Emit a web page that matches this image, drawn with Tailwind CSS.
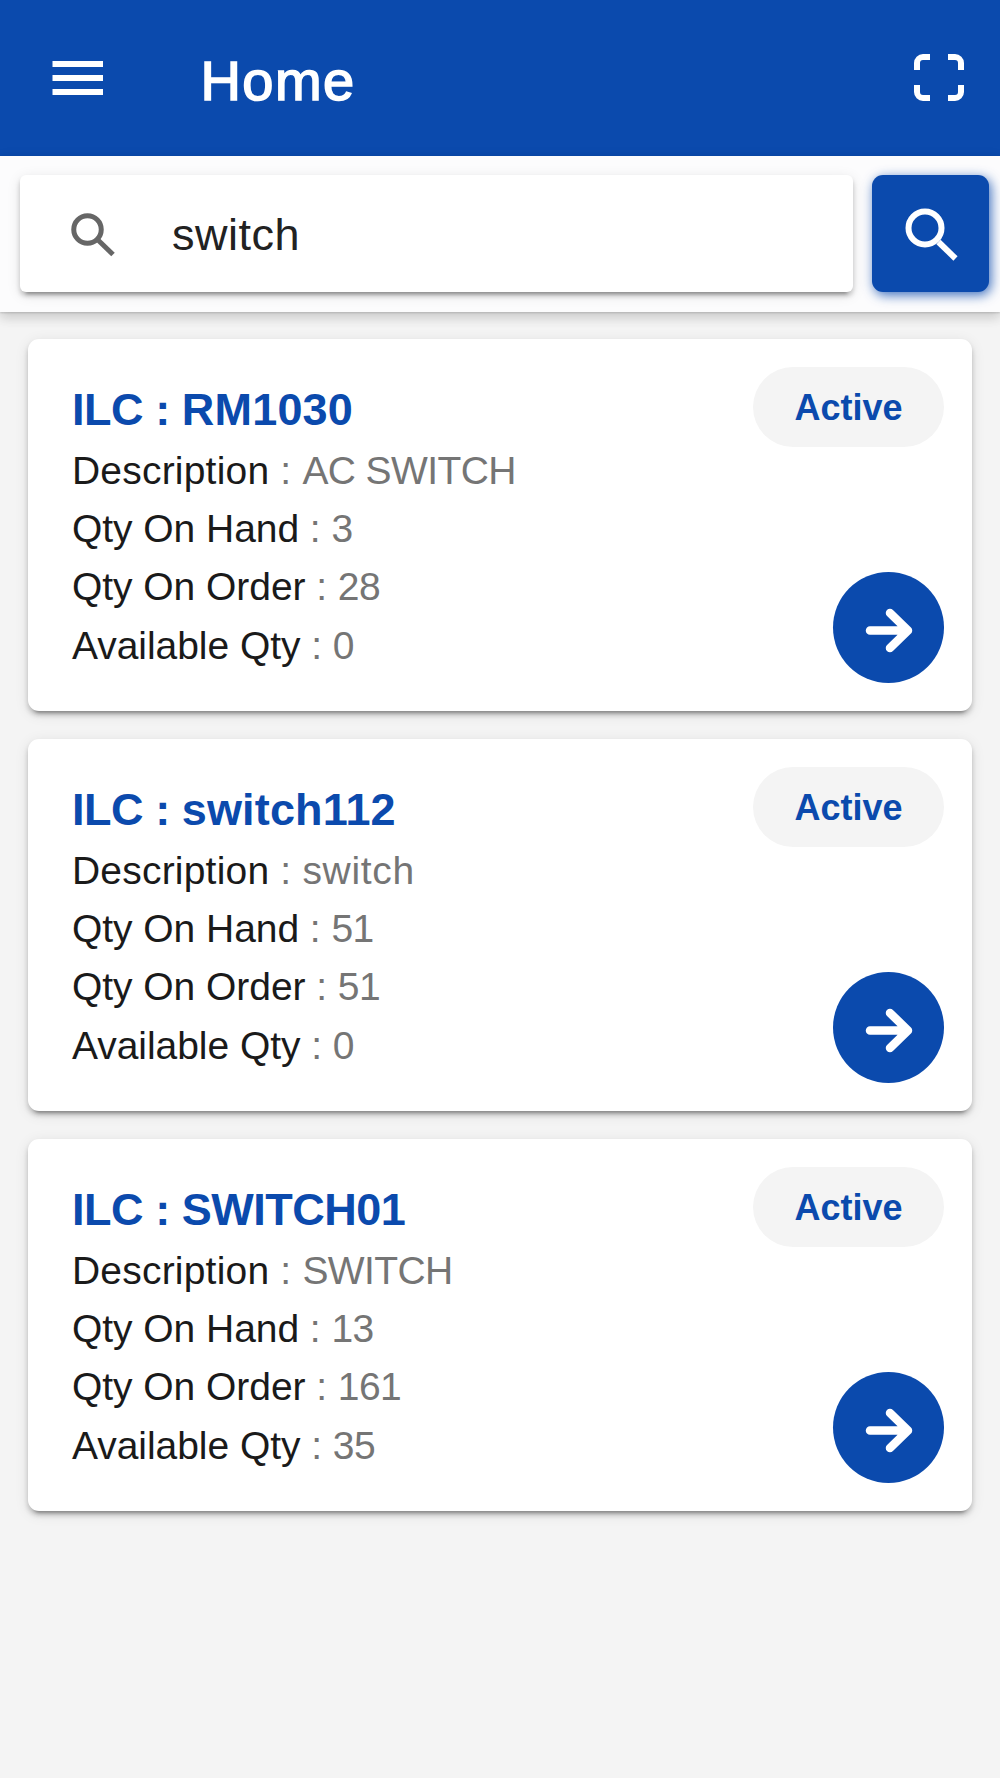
<!DOCTYPE html>
<html lang="en">
<head>
  <meta charset="UTF-8" />
  <meta name="viewport" content="width=device-width, initial-scale=1.0"/>
  <title>Home</title>
  <script src="https://cdn.jsdelivr.net/npm/@tailwindcss/browser@4"></script>
</head>
<body class="min-h-screen bg-[#f4f4f4] text-[#1a1a1a] font-['Liberation_Sans',Arial,sans-serif]">

  <header class="flex h-[155.5px] items-center bg-[#0b4aad] pl-[52px] pr-9 text-white">
    <button aria-label="Menu">
      <svg class="mt-px block h-[34px] w-[51px]" viewBox="0 0 51 34" fill="currentColor">
        <path d="M.5 0h50.5v6H.5zM.5 14h50.5v6H.5zM.5 28h50.5v6H.5z"/>
      </svg>
    </button>
    <h1 class="ml-[97.5px] mt-1.5 flex-1 text-[56px] leading-none tracking-[1.4px] [-webkit-text-stroke:1.6px_white]">Home</h1>
    <button aria-label="Scan">
      <svg class="block h-[47px] w-[50px]" viewBox="0 0 50 47" fill="none" stroke="currentColor" stroke-width="6">
        <path d="M3 16V9a6 6 0 0 1 6-6h7M34 3h7a6 6 0 0 1 6 6v7M47 31v7a6 6 0 0 1-6 6h-7M16 44H9a6 6 0 0 1-6-6v-7"/>
      </svg>
    </button>
  </header>

  <!-- Search bar -->
  <div class="flex h-[156px] gap-[19px] bg-[#fcfcfd] pl-5 pr-[11px] pt-[19.5px] shadow-[0_6px_11px_rgba(0,0,0,0.12),0_3px_14px_rgba(0,0,0,0.08),0_1px_2px_rgba(0,0,0,0.15)]">
    <div class="flex h-[117px] flex-1 items-center rounded-[6px] bg-white pl-[51px] shadow-[0_8px_3px_-6px_rgba(0,0,0,0.25),0_4px_5px_rgba(0,0,0,0.2),0_3px_14px_rgba(0,0,0,0.1)]">
      <svg class="mt-[3px] block size-[44px] text-[#666666]" viewBox="0 0 44 44" fill="none" stroke="currentColor" stroke-width="5">
        <circle cx="16.5" cy="16.5" r="13.75"/>
        <path d="M27.5 27.5L42 41.5"/>
      </svg>
      <span class="ml-[57px] mt-0.5 text-[45px] leading-none tracking-[0.5px] text-[#222222]">switch</span>
    </div>
    <button aria-label="Search" class="flex size-[117px] items-center justify-center rounded-[11px] bg-[#0b4aad] text-white shadow-[2px_3px_12px_rgba(11,74,173,0.8)]">
      <svg class="ml-[1.5px] mt-0.5 block size-[53px]" viewBox="0 0 53 53" fill="none" stroke="currentColor" stroke-width="6">
        <circle cx="20" cy="20" r="16.5"/>
        <path d="M33.5 34L50.5 50.5"/>
      </svg>
    </button>
  </div>

  <main id="itemList" class="flex flex-col gap-7 px-7 pt-[27.5px]"></main>

  <script>
    const items = [
      { ilc: "RM1030", description: "AC SWITCH", onHand: 3, onOrder: 28, available: 0 },
      { ilc: "switch112", description: "switch", onHand: 51, onOrder: 51, available: 0 },
      { ilc: "SWITCH01", description: "SWITCH", onHand: 13, onOrder: 161, available: 35 }
    ];

    const tracking = {
      "AC SWITCH": "tracking-[-0.6px]",
      "SWITCH": "tracking-[-0.6px]",
      "switch": "tracking-[0.7px]",
      "RM1030": "tracking-[0.2px]",
      "switch112": "tracking-[0.15px]",
      "SWITCH01": "tracking-[-0.5px]"
    };

    const row = (label, value) => `
      <p class="${label === "Description" ? "tracking-[0.2px]" : "tracking-[-0.05px]"}">${label} <span class="text-[#757575]">: <span class="${tracking[value] || "tracking-[-0.6px]"}">${value}</span></span></p>
    `;

    document.getElementById("itemList").innerHTML = items.map((item) => `
      <section class="flex h-[372px] justify-between rounded-[11px] bg-white p-7 pl-11 shadow-[0_8px_3px_-6px_rgba(0,0,0,0.25),0_4px_5px_rgba(0,0,0,0.2),0_3px_14px_rgba(0,0,0,0.1)]">
        <div class="pt-[13px] text-[39px] leading-[58.4px]">
          <h2 class="mb-[1.5px] text-[45px] font-bold leading-[60px] tracking-[-0.45px] text-[#0b4aad]">ILC : <span class="${tracking[item.ilc]}">${item.ilc}</span></h2>
          ${row("Description", item.description)}
          ${row("Qty On Hand", item.onHand)}
          ${row("Qty On Order", item.onOrder)}
          ${row("Available Qty", item.available)}
        </div>
        <div class="flex flex-col items-end justify-between">
          <span class="flex h-[80px] w-[191px] items-center justify-center rounded-full bg-[#f4f4f4] pt-px text-[36px] font-bold text-[#0b4aad]">Active</span>
          <button aria-label="Open" class="size-[111px] rounded-full bg-[#0b4aad] text-white">
            <svg class="block size-[111px]" viewBox="0 0 111 111" fill="none" stroke="currentColor" stroke-width="8.5" stroke-linecap="round" stroke-linejoin="round">
              <path d="M37 58.5H75M57 41L75 58.5L57 76"/>
            </svg>
          </button>
        </div>
      </section>
    `).join("");
  </script>

</body>
</html>
